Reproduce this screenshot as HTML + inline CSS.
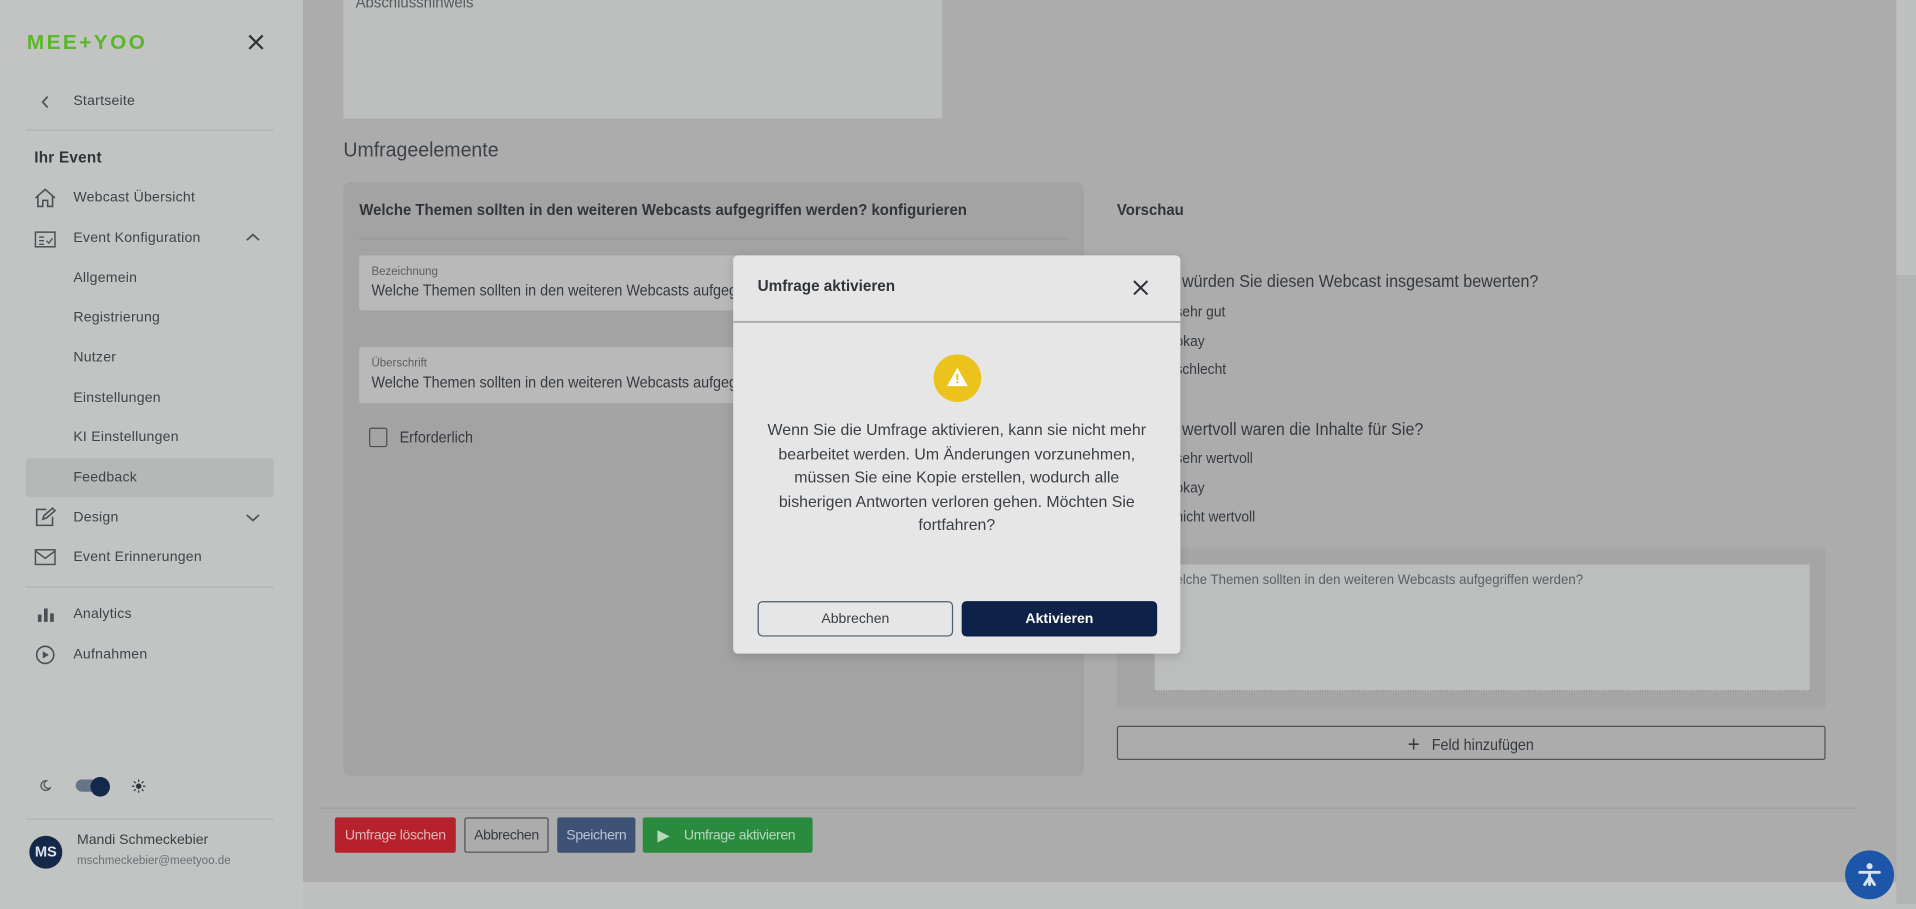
<!DOCTYPE html>
<html><head><meta charset="utf-8"><style>
*{box-sizing:border-box;margin:0;padding:0}
html,body{width:1916px;height:909px;overflow:hidden;background:#bfc1c0}
#w{position:absolute;left:0;top:0;width:1568px;height:744px;transform:scale(1.22194,1.22177);transform-origin:0 0;font-family:"Liberation Sans",sans-serif;color:#3a3f45;background:#bfc1c0}
.a{position:absolute}
.n{transform:scaleX(.94);transform-origin:0 0;white-space:nowrap}
.side{left:0;top:0;width:248px;height:744px;background:#c2c4c3}
.si{position:absolute;left:60px;font-size:11.5px;color:#3d4349;letter-spacing:.2px}
.ic{position:absolute;left:28px;width:18px;height:16px}
.sep{position:absolute;height:1px;background:#b1b3b2}
.card{left:248px;top:0;width:1304px;height:722px;background:#acacac}
.btn{position:absolute;height:29px;border-radius:2px;font-size:11.5px;display:flex;align-items:center;justify-content:center;white-space:nowrap}
</style></head><body><div id="w">
<div class="a side">
 <div class="a" style="left:22px;top:25px;font-weight:bold;font-size:17px;color:#5db52a;letter-spacing:2px">MEE+YOO</div>
 <svg class="a" style="left:203px;top:28px" width="13" height="13" viewBox="0 0 13 13"><path d="M1 1L12 12M12 1L1 12" stroke="#2d3238" stroke-width="1.8"/></svg>
 <svg class="a" style="left:33px;top:78px" width="8" height="11"><path d="M6 1L2 5.5L6 10" stroke="#4a5056" stroke-width="1.4" fill="none"/></svg>
 <div class="si" style="top:77px">Startseite</div>
 <div class="sep" style="left:21px;width:203px;top:106px"></div>
 <div class="si" style="left:28px;top:122px;font-weight:bold;font-size:12.5px;color:#30353b">Ihr Event</div>
 <svg class="ic" style="top:154px" viewBox="0 0 18 16"><path d="M1 8L9 1L17 8M3 6V15H7V10H11V15H15V6" stroke="#4a5056" stroke-width="1.3" fill="none"/></svg>
 <div class="si" style="top:156px">Webcast Übersicht</div>
 <svg class="ic" style="top:188px" viewBox="0 0 18 16"><rect x="1" y="2" width="16" height="12" stroke="#4a5056" stroke-width="1.2" fill="none"/><path d="M4 6H8M4 9H8M4 12H8M10 9L12 11L15 7" stroke="#4a5056" stroke-width="1.1" fill="none"/></svg>
 <div class="si" style="top:189px">Event Konfiguration</div>
 <svg class="a" style="left:201px;top:190px" width="12" height="8"><path d="M1 6.5L6 2L11 6.5" stroke="#4a5056" stroke-width="1.4" fill="none"/></svg>
 <div class="si" style="top:222px">Allgemein</div>
 <div class="si" style="top:254px">Registrierung</div>
 <div class="si" style="top:287px">Nutzer</div>
 <div class="si" style="top:320px">Einstellungen</div>
 <div class="si" style="top:352px">KI Einstellungen</div>
 <div class="a" style="left:21px;top:375px;width:203px;height:32px;background:#b6b7b7;border-radius:3px"></div>
 <div class="si" style="top:385px">Feedback</div>
 <svg class="ic" style="top:415px" viewBox="0 0 18 16"><path d="M10 2H2V15H15V8M7 10L8 7L15 1L17 3L10 9Z" stroke="#4a5056" stroke-width="1.3" fill="none"/></svg>
 <div class="si" style="top:418px">Design</div>
 <svg class="a" style="left:201px;top:420px" width="12" height="8"><path d="M1 1.5L6 6L11 1.5" stroke="#4a5056" stroke-width="1.4" fill="none"/></svg>
 <svg class="ic" style="top:448px" viewBox="0 0 18 16"><rect x="1" y="2" width="16" height="12" stroke="#4a5056" stroke-width="1.2" fill="none"/><path d="M1 3L9 9L17 3" stroke="#4a5056" stroke-width="1.2" fill="none"/></svg>
 <div class="si" style="top:450px">Event Erinnerungen</div>
 <div class="sep" style="left:21px;width:203px;top:480px"></div>
 <svg class="ic" style="top:495px" viewBox="0 0 18 16"><rect x="3" y="8" width="3" height="6" fill="#4a5056"/><rect x="8" y="3" width="3" height="11" fill="#4a5056"/><rect x="13" y="7" width="3" height="7" fill="#4a5056"/></svg>
 <div class="si" style="top:497px">Analytics</div>
 <svg class="ic" style="top:528px" viewBox="0 0 18 16"><circle cx="9" cy="8" r="7" stroke="#4a5056" stroke-width="1.3" fill="none"/><path d="M7 5L12 8L7 11Z" fill="#4a5056"/></svg>
 <div class="si" style="top:530px">Aufnahmen</div>
 <svg class="a" style="left:32px;top:638px" width="10" height="10" viewBox="0 0 10 10"><path d="M6 1A4 4 0 1 0 9 7A3.2 3.2 0 0 1 6 1Z" stroke="#4a5056" stroke-width="1" fill="none"/></svg>
 <div class="a" style="left:62px;top:638px;width:26px;height:10px;border-radius:5px;background:#667487"></div>
 <div class="a" style="left:74px;top:636px;width:16px;height:16px;border-radius:50%;background:#14284a"></div>
 <svg class="a" style="left:108px;top:638px" width="11" height="11" viewBox="0 0 11 11"><circle cx="5.5" cy="5.5" r="2.2" fill="#2d3238"/><path d="M5.5 0V2M5.5 9V11M0 5.5H2M9 5.5H11M1.6 1.6L3 3M8 8L9.4 9.4M1.6 9.4L3 8M8 3L9.4 1.6" stroke="#2d3238" stroke-width="1"/></svg>
 <div class="sep" style="left:21px;width:203px;top:670px"></div>
 <div class="a" style="left:24px;top:684px;width:27px;height:27px;border-radius:50%;background:#14284a;color:#dfe3ea;font-size:12px;font-weight:bold;text-align:center;line-height:27px">MS</div>
 <div class="a" style="left:63px;top:682px;font-size:11.5px;color:#3a3f45">Mandi Schmeckebier</div>
 <div class="a" style="left:63px;top:699px;font-size:9.5px;color:#6a6f74">mschmeckebier@meetyoo.de</div>
</div>
<div class="a card"></div>
<div class="a" style="left:1552px;top:225px;width:16px;height:515px;background:#b3b4b4"></div>
<div class="a" style="left:281px;top:0;width:490px;height:97px;background:#bdbfbe"></div>
<div class="a n" style="left:291px;top:-6px;font-size:13px;color:#555a5f">Abschlusshinweis</div>
<div class="a n" style="left:281px;top:113px;font-size:17px;color:#3d4248">Umfrageelemente</div>
<div class="a" style="left:281px;top:149px;width:606px;height:486px;background:#a3a3a3;border-radius:6px"></div>
<div class="a n" style="left:294px;top:164px;font-size:13px;font-weight:bold;color:#30353b">Welche Themen sollten in den weiteren Webcasts aufgegriffen werden? konfigurieren</div>
<div class="a" style="left:294px;top:195px;width:581px;height:1px;background:#979797"></div>
<div class="a" style="left:294px;top:209px;width:320px;height:45px;background:#b9b9b9;border-radius:2px;overflow:hidden">
 <div class="a n" style="left:10px;top:8px;font-size:10px;color:#5a5f64">Bezeichnung</div>
 <div class="a n" style="left:10px;top:22px;font-size:12.5px;color:#353a40">Welche Themen sollten in den weiteren Webcasts aufgegriffen</div>
</div>
<div class="a" style="left:294px;top:284px;width:320px;height:46px;background:#b9b9b9;border-radius:2px;overflow:hidden">
 <div class="a n" style="left:10px;top:8px;font-size:10px;color:#5a5f64">Überschrift</div>
 <div class="a n" style="left:10px;top:22px;font-size:12.5px;color:#353a40">Welche Themen sollten in den weiteren Webcasts aufgegriffen</div>
</div>
<div class="a" style="left:302px;top:350px;width:15px;height:16px;border:1.5px solid #4a4f54;border-radius:2px"></div>
<div class="a n" style="left:327px;top:351px;font-size:12.5px;color:#353a40">Erforderlich</div>
<div class="a n" style="left:914px;top:164px;font-size:13px;font-weight:bold;color:#30353b">Vorschau</div>
<div class="a n" style="left:941px;top:222px;font-size:14px;color:#353a40">Wie würden Sie diesen Webcast insgesamt bewerten?</div>
<div class="a n" style="left:962px;top:248px;font-size:12px;color:#353a40">sehr gut</div>
<div class="a n" style="left:962px;top:272px;font-size:12px;color:#353a40">okay</div>
<div class="a n" style="left:962px;top:295px;font-size:12px;color:#353a40">schlecht</div>
<div class="a n" style="left:941px;top:343px;font-size:14px;color:#353a40">Wie wertvoll waren die Inhalte für Sie?</div>
<div class="a n" style="left:962px;top:368px;font-size:12px;color:#353a40">sehr wertvoll</div>
<div class="a n" style="left:962px;top:392px;font-size:12px;color:#353a40">okay</div>
<div class="a n" style="left:962px;top:416px;font-size:12px;color:#353a40">nicht wertvoll</div>
<div class="a" style="left:914px;top:449px;width:580px;height:130px;background:#a5a5a5"></div>
<div class="a" style="left:945px;top:462px;width:536px;height:104px;background:#bcbdbd;border-bottom:1px dotted #888"></div>
<div class="a n" style="left:952px;top:469px;font-size:11.5px;color:#5a5f64">Welche Themen sollten in den weiteren Webcasts aufgegriffen werden?</div>
<div class="a" style="left:914px;top:594px;width:580px;height:28px;border:1px solid #4d5258;border-radius:2px"></div>
<div class="a n" style="left:1152px;top:598px;font-size:12.5px;color:#353a40"><span style="font-size:18px;position:relative;top:1px">+</span>&nbsp;&nbsp;&nbsp;Feld hinzufügen</div>
<div class="a" style="left:262px;top:661px;width:1258px;height:1px;background:#9d9d9d"></div>
<div class="btn" style="left:274px;top:669px;width:99px;background:#b5222c;color:#e2b6b9;letter-spacing:-.3px">Umfrage löschen</div>
<div class="btn" style="left:380px;top:669px;width:69px;border:1px solid #4b5056;color:#353a40;letter-spacing:-.3px">Abbrechen</div>
<div class="btn" style="left:456px;top:669px;width:64px;background:#3e5276;color:#b9c3d4;letter-spacing:-.3px">Speichern</div>
<div class="btn" style="left:526px;top:669px;width:139px;background:#2a8b3f;color:#b5d9bd;justify-content:flex-start;padding-left:12px;letter-spacing:-.3px"><span style="font-size:13px">▶</span><span style="margin-left:12px">Umfrage aktivieren</span></div>
<div class="a" style="left:1510px;top:696px;width:40px;height:40px;border-radius:50%;background:#1d55a8"></div>
<svg class="a" style="left:1519px;top:705px" width="22" height="22" viewBox="0 0 22 22"><circle cx="11" cy="4" r="2.5" fill="#d8e2f2"/><path d="M3 9H19M11 9V19M11 13L7 19M11 13L15 19" stroke="#d8e2f2" stroke-width="2.4" fill="none" stroke-linecap="round"/></svg>
<div class="a" style="left:600px;top:209px;width:366px;height:326px;background:#e6e6e6;border-radius:4px;box-shadow:0 2px 8px rgba(0,0,0,.15)"></div>
<div class="a" style="left:620px;top:227px;font-size:12.5px;font-weight:bold;color:#30353b">Umfrage aktivieren</div>
<svg class="a" style="left:927px;top:229px" width="13" height="13" viewBox="0 0 13 13"><path d="M1 1L12 12M12 1L1 12" stroke="#2d3238" stroke-width="1.7"/></svg>
<div class="a" style="left:600px;top:263px;width:366px;height:1px;background:#8a8d91"></div>
<div class="a" style="left:764px;top:290px;width:39px;height:39px;border-radius:50%;background:#ebc31c"></div>
<svg class="a" style="left:773px;top:299px" width="21" height="19" viewBox="0 0 21 19"><path d="M10.5 2L19 17H2Z" fill="#fff"/><rect x="9.7" y="7" width="1.6" height="5" fill="#ebc31c"/><rect x="9.7" y="13" width="1.6" height="1.6" fill="#ebc31c"/></svg>
<div class="a" style="left:622px;top:342px;width:322px;text-align:center;font-size:13px;line-height:19.6px;color:#3a3f45">Wenn Sie die Umfrage aktivieren, kann sie nicht mehr bearbeitet werden. Um Änderungen vorzunehmen, müssen Sie eine Kopie erstellen, wodurch alle bisherigen Antworten verloren gehen. Möchten Sie fortfahren?</div>
<div class="btn" style="left:620px;top:492px;width:160px;border:1px solid #4d5b70;border-radius:4px;color:#3a3f45;font-size:11.5px">Abbrechen</div>
<div class="btn" style="left:787px;top:492px;width:160px;background:#0e2148;border-radius:4px;color:#fff;font-size:11.5px;font-weight:bold">Aktivieren</div>
</div></body></html>
